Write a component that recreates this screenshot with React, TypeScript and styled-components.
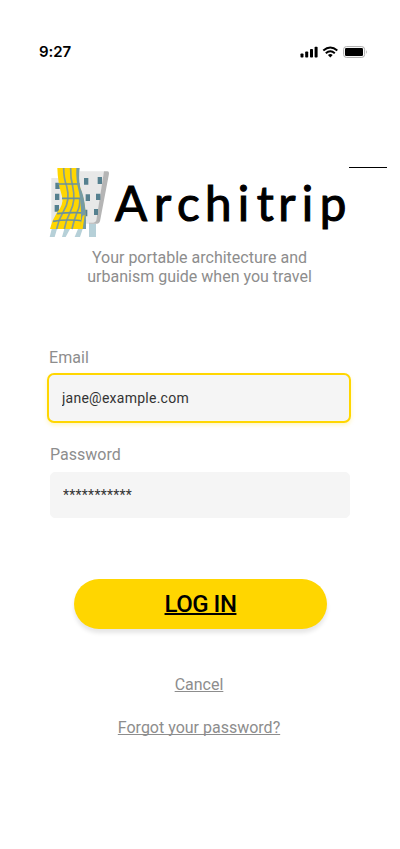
import React from 'react';
import styled, { createGlobalStyle } from 'styled-components';

const GlobalStyle = createGlobalStyle`
  * { box-sizing: border-box; }
  body { margin: 0; background: #fff; }
`;

const Screen = styled.main`
  width: 400px;
  height: 849px;
  overflow: hidden;
  background: #fff;
  font-family: Roboto, sans-serif;
  color: #8d8d8d;
  display: flex;
  flex-direction: column;
`;

const StatusBar = styled.header`
  height: 104px;
  padding: 0 32px 0 39px;
  display: flex;
  align-items: center;
  justify-content: space-between;
`;

const Time = styled.span`
  font: 600 15px/20px Inter, sans-serif;
  letter-spacing: -0.1px;
  color: #000;
`;

const StatusIcons = styled.svg`
  display: block;
  width: 68px;
  height: 14px;
`;

const Brand = styled.h1`
  margin: 56px 0 0;
  padding-left: 44px;
  height: 84px;
  display: flex;
`;

const Building = styled.svg`
  width: 70px;
  height: 84px;
  flex: none;
`;

const Wordmark = styled.svg`
  width: 286px;
  height: 84px;
  flex: none;
  font-family: Lato, sans-serif;
  font-weight: 400;
`;

const Tagline = styled.p`
  margin: 4px 0 0;
  font-size: 16px;
  line-height: 19px;
  text-align: center;
  padding-right: 1px;
`;

const Form = styled.form`
  margin-top: 62px;
  display: flex;
  flex-direction: column;
`;

const Field = styled.label<{ $active?: boolean }>`
  display: flex;
  flex-direction: column;
  padding: 0 ${p => (p.$active ? '49px 0 47px' : '50px')};
  margin-bottom: ${p => (p.$active ? '22px' : '61px')};
`;

const Caption = styled.span<{ $active?: boolean }>`
  font-size: 16px;
  line-height: 20px;
  letter-spacing: ${p => (p.$active ? '0.05px' : '0')};
  margin-left: ${p => (p.$active ? '2px' : '0')};
  margin-bottom: ${p => (p.$active ? '5px' : '7px')};
`;

const Input = styled.input<{ $active?: boolean }>`
  width: 100%;
  height: ${p => (p.$active ? '50px' : '46px')};
  padding: 0 ${p => (p.$active ? '13px' : '12px')};
  border: ${p => (p.$active ? '2px solid #ffd600' : '1px solid #f5f5f5')};
  border-radius: ${p => (p.$active ? '7px' : '5px')};
  outline: none;
  background: #f5f5f5;
  box-shadow: ${p => (p.$active ? '0 2px 4px rgba(255, 214, 0, 0.25)' : 'none')};
  color: #333;
  font: 400 14px/20px Roboto, sans-serif;
  letter-spacing: 0.25px;
`;

const LoginButton = styled.button`
  align-self: center;
  width: 253px;
  height: 50px;
  margin-left: 1px;
  padding: 0;
  border: 0;
  border-radius: 25px;
  background: #ffd600;
  box-shadow: 0 4px 4px rgba(0, 0, 0, 0.1);
  color: #000;
  font: 500 24px/28px Roboto, sans-serif;
  letter-spacing: -0.5px;
  text-decoration: underline;
  text-decoration-thickness: 1.5px;
`;

const Links = styled.nav`
  margin-top: 46px;
  display: flex;
  flex-direction: column;
  align-items: center;
  gap: 23px;
  padding-right: 2px;
`;

const TextLink = styled.a`
  font-size: 16px;
  line-height: 20px;
  color: #8d8d8d;
  text-decoration: underline;
  text-decoration-skip-ink: none;
`;

function LogoIcon() {
  return (
    <Building viewBox="0 0 210 252" aria-hidden="true">
      <path d="M22 54h34v150H22zM104 34h77L157 191h-40z" fill="#e8e8e8" />
      <path d="M180 34h10q6 0 5 7l-27 143q-2 7-8 7h-25v-3h13q7 0 9-7z" fill="#b5b5b5" />
      <path d="M34 68h13v19H34zM33 101h13v19H33zM32 135h13v20H32zM120 54h13v20h-13zM161 51h13v21h-13zM125 103h13v20h-13zM156 101h13v19h-13zM119 149h11v20h-11zM150 147h12v18h-12z" fill="#55808f" />
      <path d="M135 192h21v39h-21zM23 207h16l-7 24H17zM61 207h17l-13 24H54zM102 207h14l-8 24H92z" fill="#b6d0d8" />
      <path d="M40 24h62q-2 34 10 70 16 43 13 113H18q6-26 20-48 22-24 16-50-13-42-14-85z" fill="#ffd600" />
      <g fill="none" stroke="#829c98" strokeWidth="5">
        <path d="M59 24q0 30 9 55 12 42-10 76-15 26-20 52M80 24q-1 30 6 55 10 42-7 76-13 26-18 52M107 115q2 24-8 42-10 26-15 50" />
        <path d="M41 72h66M54 115h62M39 161q40-5 86-2M27 184q46-8 99 0" stroke="#6b929a" />
      </g>
      <path d="M97 24h10q-4 28 2 60 18 36 17 123h-16q4-66-5-110-10-36-8-73" fill="#759ba4" />
      <path d="M107 207l9-40 6-2-6 42z" fill="#ffd600" />
    </Building>
  );
}

export default function App() {
  return (
    <>
      <GlobalStyle />
      <Screen>
        <StatusBar>
          <Time>9:27</Time>
          <StatusIcons viewBox="0 0 68 14" aria-label="Signal, Wi-Fi and battery">
            <g fill="#000">
              <rect x="0.5" y="8.5" width="3" height="4" rx="0.8" />
              <rect x="5.2" y="6.5" width="3" height="6" rx="0.8" />
              <rect x="10" y="4" width="3" height="8.5" rx="0.8" />
              <rect x="14.6" y="1.8" width="3" height="10.7" rx="0.8" />
            </g>
            <g fill="none" stroke="#000" strokeWidth="2">
              <path d="M23.3 5.5q7-6 14 0M25.8 8.2q4.5-3.8 9 0" />
            </g>
            <path d="M27.9 10q2.4-1.8 4.8 0l-2.4 2.5z" />
            <rect x="43.6" y="1.6" width="21" height="10.8" rx="2.8" fill="none" stroke="#aaa" />
            <rect x="45" y="3" width="18" height="8" rx="1.2" />
            <path d="M66 5q1.7 2 0 4z" fill="#aaa" />
          </StatusIcons>
        </StatusBar>
        <Brand>
          <LogoIcon />
          <Wordmark viewBox="0 0 286 84">
            <text x="1 40 63 91 123.8 142.7 164.3 187.8 205.8" y="61" fontSize="47.5" stroke="#000" strokeWidth="1.1">Architrip</text>
            <path d="M235 7.5h38" stroke="#000" />
          </Wordmark>
        </Brand>
        <Tagline>Your portable architecture and<br />urbanism guide when you travel</Tagline>
        <Form onSubmit={e => e.preventDefault()}>
          <Field $active>
            <Caption $active>Email</Caption>
            <Input $active type="text" defaultValue="jane@example.com" />
          </Field>
          <Field>
            <Caption>Password</Caption>
            <Input type="text" defaultValue="***********" />
          </Field>
          <LoginButton>LOG IN</LoginButton>
        </Form>
        <Links>
          <TextLink href="#cancel">Cancel</TextLink>
          <TextLink href="#forgot">Forgot your password?</TextLink>
        </Links>
      </Screen>
    </>
  );
}
